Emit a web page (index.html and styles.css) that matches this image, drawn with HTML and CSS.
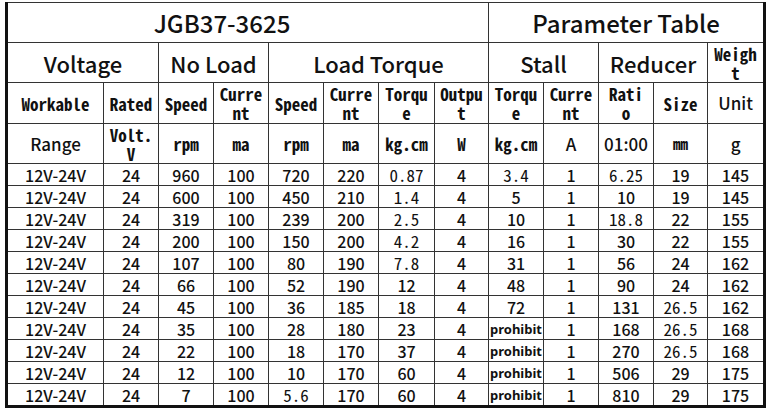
FILE: index.html
```html
<!DOCTYPE html>
<html lang="en">
<head>
<meta charset="utf-8">
<title>JGB37-3625 Parameter Table</title>
<link rel="stylesheet" href="styles.css">
</head>
<body>
<table class="spec">
  <colgroup>
    <col class="c-wide"><col class="c55"><col class="c55"><col class="c55"><col class="c55"><col class="c55"><col class="c56"><col class="c54"><col class="c55"><col class="c55"><col class="c55"><col class="c54"><col class="c57">
  </colgroup>
  <tr class="r-title">
    <th colspan="8" class="model">JGB37-3625</th>
    <th colspan="5">Parameter Table</th>
  </tr>
  <tr class="r-group">
    <th colspan="2">Voltage</th>
    <th colspan="2">No Load</th>
    <th colspan="4">Load Torque</th>
    <th colspan="2">Stall</th>
    <th colspan="2">Reducer</th>
    <th class="mono">Weigh<br>t</th>
  </tr>
  <tr class="r-head">
    <th class="mono">Workable</th>
    <th class="mono">Rated</th>
    <th class="mono">Speed</th>
    <th class="mono">Curre<br>nt</th>
    <th class="mono">Speed</th>
    <th class="mono">Curre<br>nt</th>
    <th class="mono">Torqu<br>e</th>
    <th class="mono">Outpu<br>t</th>
    <th class="mono">Torqu<br>e</th>
    <th class="mono">Curre<br>nt</th>
    <th class="mono">Rati<br>o</th>
    <th class="mono">Size</th>
    <th class="sans">Unit</th>
  </tr>
  <tr class="r-unit">
    <th class="sans">Range</th>
    <th class="mono">Volt.<br>V</th>
    <th class="mono">rpm</th>
    <th class="mono">ma</th>
    <th class="mono">rpm</th>
    <th class="mono">ma</th>
    <th class="mono">kg.cm</th>
    <th class="mono">W</th>
    <th class="mono">kg.cm</th>
    <th class="sans">A</th>
    <th class="sans">01:00</th>
    <th class="mono small">mm</th>
    <th class="sans">g</th>
  </tr>
  <tr><td>12V-24V</td><td>24</td><td>960</td><td>100</td><td>720</td><td>220</td><td class="dec">0.87</td><td>4</td><td class="dec">3.4</td><td>1</td><td class="dec">6.25</td><td>19</td><td>145</td></tr>
  <tr><td>12V-24V</td><td>24</td><td>600</td><td>100</td><td>450</td><td>210</td><td class="dec">1.4</td><td>4</td><td>5</td><td>1</td><td>10</td><td>19</td><td>145</td></tr>
  <tr><td>12V-24V</td><td>24</td><td>319</td><td>100</td><td>239</td><td>200</td><td class="dec">2.5</td><td>4</td><td>10</td><td>1</td><td class="dec">18.8</td><td>22</td><td>155</td></tr>
  <tr><td>12V-24V</td><td>24</td><td>200</td><td>100</td><td>150</td><td>200</td><td class="dec">4.2</td><td>4</td><td>16</td><td>1</td><td>30</td><td>22</td><td>155</td></tr>
  <tr><td>12V-24V</td><td>24</td><td>107</td><td>100</td><td>80</td><td>190</td><td class="dec">7.8</td><td>4</td><td>31</td><td>1</td><td>56</td><td>24</td><td>162</td></tr>
  <tr><td>12V-24V</td><td>24</td><td>66</td><td>100</td><td>52</td><td>190</td><td>12</td><td>4</td><td>48</td><td>1</td><td>90</td><td>24</td><td>162</td></tr>
  <tr><td>12V-24V</td><td>24</td><td>45</td><td>100</td><td>36</td><td>185</td><td>18</td><td>4</td><td>72</td><td>1</td><td>131</td><td class="dec">26.5</td><td>162</td></tr>
  <tr><td>12V-24V</td><td>24</td><td>35</td><td>100</td><td>28</td><td>180</td><td>23</td><td>4</td><td class="pro">prohibit</td><td>1</td><td>168</td><td class="dec">26.5</td><td>168</td></tr>
  <tr><td>12V-24V</td><td>24</td><td>22</td><td>100</td><td>18</td><td>170</td><td>37</td><td>4</td><td class="pro">prohibit</td><td>1</td><td>270</td><td class="dec">26.5</td><td>168</td></tr>
  <tr><td>12V-24V</td><td>24</td><td>12</td><td>100</td><td>10</td><td>170</td><td>60</td><td>4</td><td class="pro">prohibit</td><td>1</td><td>506</td><td>29</td><td>175</td></tr>
  <tr><td>12V-24V</td><td>24</td><td>7</td><td>100</td><td class="dec">5.6</td><td>170</td><td>60</td><td>4</td><td class="pro">prohibit</td><td>1</td><td>810</td><td>29</td><td>175</td></tr>
</table>
</body>
</html>
```

FILE: styles.css
```css
html, body {
  margin: 0;
  padding: 0;
  background: #ffffff;
}

.spec {
  margin: 2px 0 0 5px;
  border-collapse: collapse;
  table-layout: fixed;
  width: 759px;
  border-left: 3px solid #111;
  border-right: 3px solid #111;
  border-bottom: 3px solid #111;
  border-top: 1px solid #444;
  color: #111;
  font-family: "Noto Sans CJK SC", "Noto Sans", sans-serif;
}

.c-wide { width: 97px; }
.c55 { width: 55px; }
.c56 { width: 56px; }
.c54 { width: 54px; }
.c57 { width: 57px; }

.spec th,
.spec td {
  border: 1px solid #333;
  padding: 0;
  text-align: center;
  vertical-align: middle;
  font-weight: normal;
  white-space: nowrap;
}

.r-title { height: 40px; }
.r-title th {
  font-size: 24px;
  font-weight: 500;
  line-height: 28px;
}
.r-title .model { padding-right: 52px; }

.r-group { height: 40px; }
.r-group th {
  font-size: 22px;
  font-weight: 500;
  line-height: 26px;
}

.r-head { height: 41px; }
.r-unit { height: 40px; }

.spec .mono {
  font-family: "Noto Sans Mono CJK SC", "DejaVu Sans Mono", monospace;
  font-size: 17px;
  font-weight: bold;
  line-height: 19px;
}

.spec .mono.small {
  font-size: 15px;
}

.spec .sans {
  font-size: 17px;
  font-weight: 500;
  line-height: 20px;
}

.spec td {
  height: 21px;
  font-size: 16px;
  line-height: 18px;
  font-weight: 500;
}

.spec td.dec {
  font-family: "Noto Sans Mono CJK SC", "DejaVu Sans Mono", monospace;
  font-size: 17px;
  font-weight: 500;
}

.spec td.pro {
  font-family: "Noto Sans", sans-serif;
  font-size: 13px;
  font-weight: bold;
  text-align: left;
  padding-left: 1px;
}
```
